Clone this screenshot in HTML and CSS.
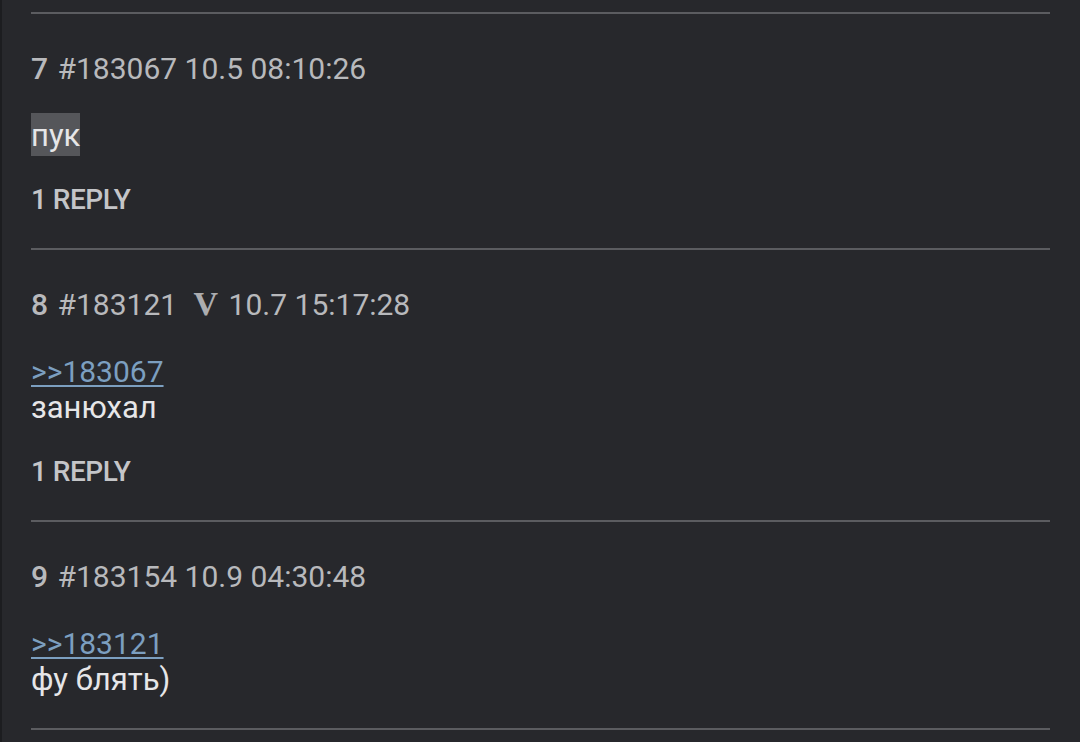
FILE: index.html
```html
<!DOCTYPE html>
<html lang="ru">

<head>
    <meta charset="UTF-8">
    <title>Thread</title>
    <link rel="stylesheet" href="styles.css">
</head>

<body>

    <section class="thread">

        <article class="post">
            <div class="post-head"><span class="num">7</span> #183067 10.5 08:10:26</div>
            <div class="post-body"><span class="hl">пук</span></div>
            <div class="post-replies">1 REPLY</div>
        </article>

        <article class="post">
            <div class="post-head"><span class="num">8</span> #183121 <span class="badge">V</span> 10.7 15:17:28</div>
            <div class="post-body">
                <a class="quote" href="#">&gt;&gt;183067</a><br>
                занюхал
            </div>
            <div class="post-replies">1 REPLY</div>
        </article>

        <article class="post">
            <div class="post-head"><span class="num">9</span> #183154 10.9 04:30:48</div>
            <div class="post-body">
                <a class="quote" href="#">&gt;&gt;183121</a><br>
                фу блять)
            </div>
        </article>

    </section>

</body>

</html>
```

FILE: styles.css
```css
body {
    font-family: Roboto, "Noto Sans", sans-serif;
    margin: 0;
    padding: 0;
    background-color: #27282c;
    color: #e4e4e6;
    border-left: 2px solid #1c1d20;
    min-height: 742px;
    box-sizing: border-box;
}

.thread {
    padding: 12px 30px 0 29px;
}

.post {
    border-top: 2px solid #5b5c60;
    padding: 37px 0 30px;
}

.post:last-child {
    border-bottom: 2px solid #5b5c60;
}

.post-head {
    font-size: 30px;
    line-height: 36px;
    color: #b8b9bc;
}

.num {
    font-weight: 500;
    margin-right: 2px;
}

.badge {
    font-family: "Liberation Serif", serif;
    font-weight: bold;
    font-size: 34px;
    line-height: 30px;
    color: #acadb0;
    margin: 0 3px 0 9px;
}

.post-body {
    margin-top: 31px;
    font-size: 31px;
    line-height: 36px;
    color: #e6e6e8;
}

.hl {
    background-color: #55565a;
    padding: 4px 0 2px;
}

.quote {
    font-size: 30px;
    color: #7c9fc0;
    text-decoration: underline;
    text-decoration-thickness: 2px;
    text-underline-offset: 3px;
}

.post-replies {
    margin-top: 28px;
    font-size: 28px;
    line-height: 36px;
    font-weight: 500;
    color: #c4c5c8;
    letter-spacing: -0.5px;
}
```
